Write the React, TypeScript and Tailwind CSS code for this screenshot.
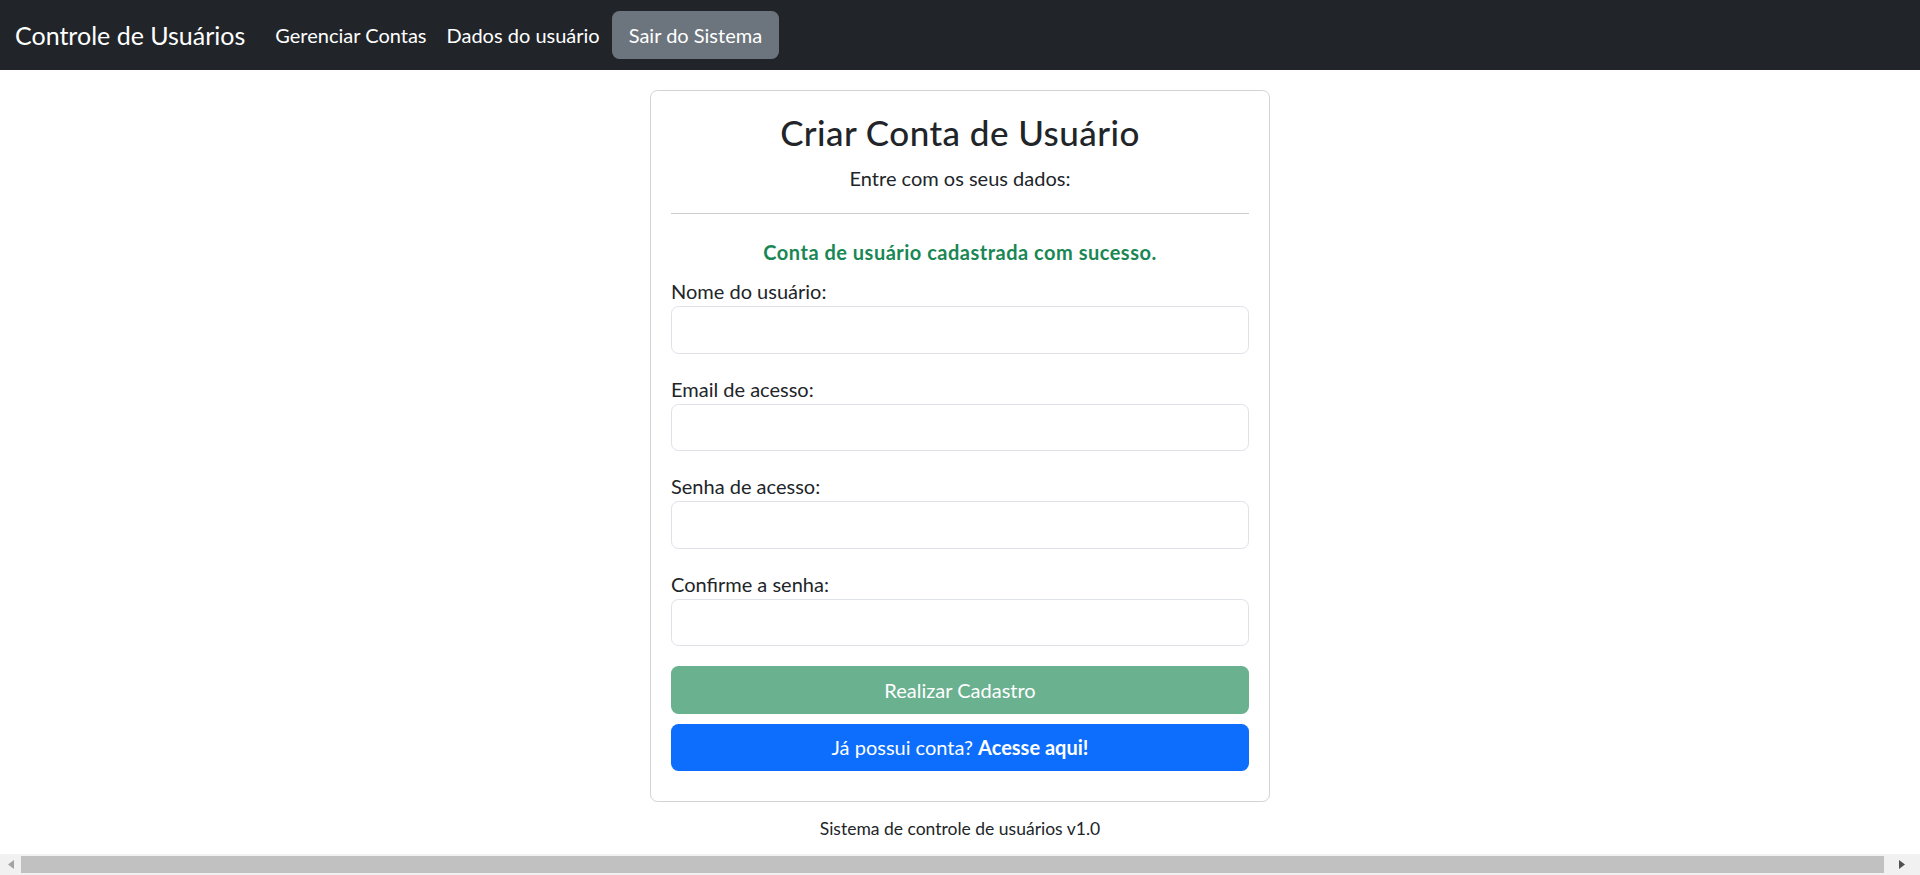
import React from "react";

const font = { fontFamily: "Lato, 'Noto Sans', sans-serif" };

function Field({ label, type = "text" }: { label: string; type?: string }) {
  return (
    <div className="mb-[20px]">
      <label className="block text-[20px] leading-[30px] text-[#212529]">{label}</label>
      <input
        type={type}
        className="block w-full h-[47.5px] rounded-[7.5px] border border-[#dee2e6] bg-white px-[15px] text-[20px] outline-none"
      />
    </div>
  );
}

export default function App() {
  return (
    <div className="min-h-screen bg-white text-[#212529]" style={font}>
      <nav className="h-[70px] bg-[#212529] flex items-center px-[15px]">
        <span className="text-white text-[25px] leading-[37px] mr-[20px]">Controle de Usuários</span>
        <a className="text-white text-[20px] leading-[30px] px-[10px]">Gerenciar Contas</a>
        <a className="text-white text-[20px] leading-[30px] pl-[10px] pr-[12px]">Dados do usuário</a>
        <a className="text-white text-[20px] leading-[30px] px-[17px] h-[48px] flex items-center rounded-[7.5px] bg-[#6c757d]">
          Sair do Sistema
        </a>
      </nav>

      <main className="flex flex-col items-center pt-[20px]">
        <div className="w-[620px] rounded-[7.5px] border border-[#d3d3d3] p-[20px] pb-[30px]">
          <h3 className="text-center text-[35px] leading-[42px] font-medium tracking-[0.45px] mb-[10px]">Criar Conta de Usuário</h3>
          <p className="text-center text-[20px] leading-[30px]">Entre com os seus dados:</p>
          <hr className="my-[20px] border-t border-[#cccccc]" />
          <p className="text-center text-[20px] leading-[30px] font-bold tracking-[0.5px] text-[#198754] mb-[9px] pt-[3px]">
            Conta de usuário cadastrada com sucesso.
          </p>
          <Field label="Nome do usuário:" />
          <Field label="Email de acesso:" type="email" />
          <Field label="Senha de acesso:" type="password" />
          <Field label="Confirme a senha:" type="password" />
          <button className="block w-full h-[47.5px] rounded-[7.5px] bg-[#6ab190] text-white text-[20px]">
            Realizar Cadastro
          </button>
          <button className="block w-full h-[47.5px] mt-[10px] rounded-[7.5px] bg-[#0d6efd] text-white text-[20px]">
            Já possui conta? <strong className="font-bold">Acesse aqui!</strong>
          </button>
        </div>
        <p className="mt-[12px] text-[17.5px] leading-[30px] text-center">Sistema de controle de usuários v1.0</p>
      </main>

      <div className="fixed bottom-0 left-0 right-0 h-[21px] bg-[#f1f1f1] flex items-center">
        <div className="w-[21px] h-full flex items-center justify-center">
          <svg width="6" height="9" viewBox="0 0 6 9"><polygon points="6,0 6,9 0,4.5" fill="#a3a3a3" /></svg>
        </div>
        <div className="flex-1 h-[17px] bg-[#c1c1c1]" />
        <div className="w-[36px] h-full flex items-center justify-center">
          <svg width="6" height="9" viewBox="0 0 6 9"><polygon points="0,0 0,9 6,4.5" fill="#505050" /></svg>
        </div>
      </div>
    </div>
  );
}
